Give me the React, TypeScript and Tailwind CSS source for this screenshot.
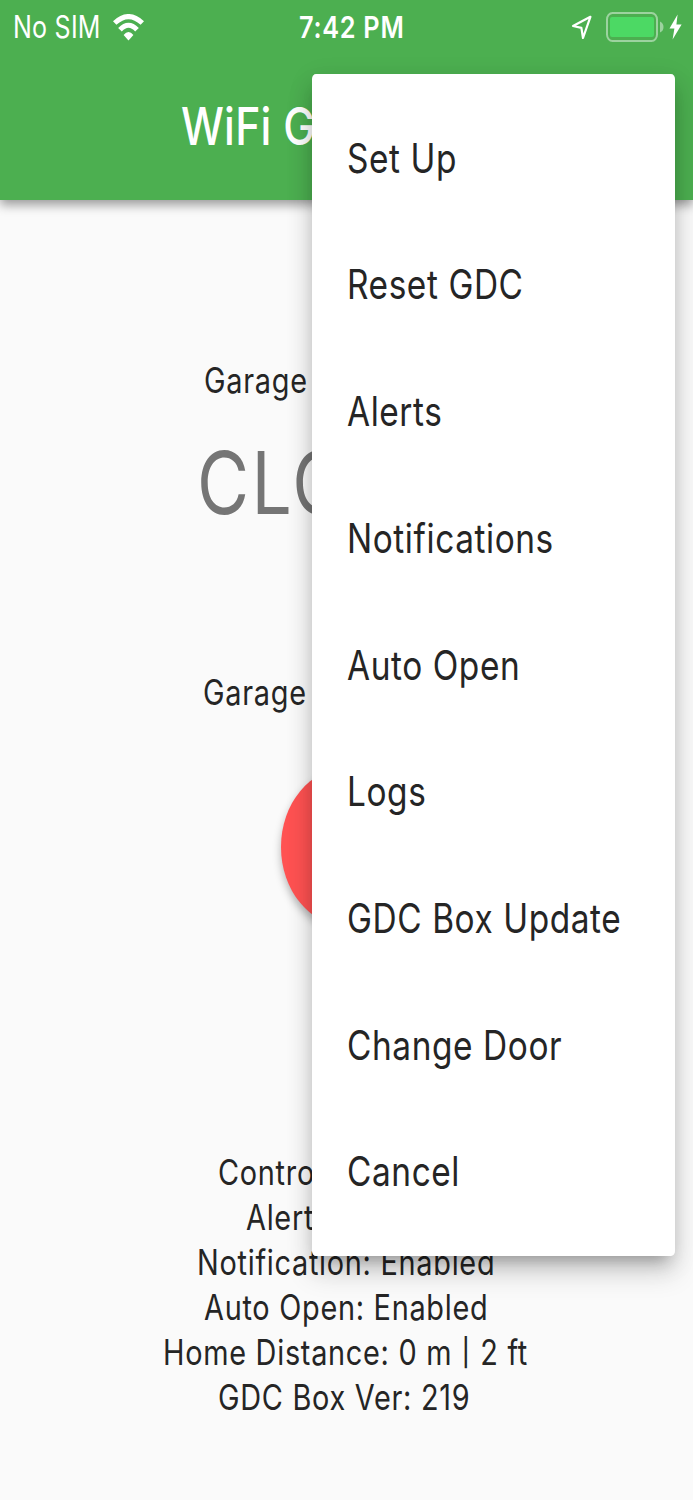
import React from 'react';

const MENU_ITEMS = [
  'Set Up',
  'Reset GDC',
  'Alerts',
  'Notifications',
  'Auto Open',
  'Logs',
  'GDC Box Update',
  'Change Door',
  'Cancel',
];

const WifiIcon = () => (
  <svg className="w-[31px] h-[27px]" viewBox="0 0 31 27" preserveAspectRatio="none" fill="none" stroke="white">
    <path d="M1.7 9 Q15.5 -3.8 29.3 9" strokeWidth="5" />
    <path d="M7 15.7 Q15.5 6.7 24 15.7" strokeWidth="5" />
    <path d="M15.5 26.6 L10.6 20.9 Q15.5 14.9 20.4 20.9 Z" fill="white" stroke="none" />
  </svg>
);

const LocationIcon = () => (
  <svg className="w-[22px] h-[26px]" viewBox="0 0 22 26" fill="none" stroke="white" strokeWidth="2.2" strokeLinejoin="round">
    <path d="M19.4 2.8 L2 12 L10.4 13.8 L12 24 Z" />
  </svg>
);

const BatteryIcon = () => (
  <svg className="w-[58px] h-[30px]" viewBox="0 0 58 30" fill="none">
    <rect x="1" y="1" width="50" height="28" rx="5.5" ry="6.5" stroke="white" strokeOpacity="0.45" strokeWidth="2" />
    <rect x="4" y="5" width="44" height="20" rx="2" fill="#4cd964" />
    <path d="M54 9.5 Q57.5 11 57.5 15 Q57.5 19 54 20.5 Z" fill="white" fillOpacity="0.45" />
  </svg>
);

const BoltIcon = () => (
  <svg className="w-[13px] h-[26px]" viewBox="0 0 13 26" fill="white">
    <path d="M8.6 0.5 L0.5 14.6 H5.4 L3.6 25.5 L12.6 10.4 H7.4 Z" />
  </svg>
);

const StatusBar = () => (
  <div className="relative flex h-[54px] items-center pl-[13px] pr-[10px] text-[30.5px] leading-none">
    <div className="w-[100px]">
      <span className="inline-block origin-left scale-x-[0.82] whitespace-nowrap tracking-[0.3px]">No SIM</span>
    </div>
    <WifiIcon />
    <div className="ml-[154.5px] w-[272.5px]">
      <span className="inline-block origin-left scale-x-[0.83] whitespace-nowrap font-semibold tracking-[0.85px]">
        7:42 PM
      </span>
    </div>
    <LocationIcon />
    <div className="ml-[13px] flex items-center gap-[5px]">
      <BatteryIcon />
      <BoltIcon />
    </div>
  </div>
);

const PopupMenu = () => (
  <ul className="absolute top-[73.5px] left-[312px] w-[363px] rounded-[4px/5px] bg-white pt-[22.2px] pb-[20.6px] shadow-[0_11px_15px_-8px_rgba(0,0,0,0.3),0_17px_26px_2px_rgba(0,0,0,0.13),0_6px_26px_2px_rgba(0,0,0,0.08)]">
    {MENU_ITEMS.map((item) => (
      <li key={item} className="flex h-[126.7px] items-center pl-[34.5px] text-[40.5px] leading-none">
        <span className="origin-left scale-x-[0.825] whitespace-nowrap tracking-[0.7px]">{item}</span>
      </li>
    ))}
  </ul>
);

export default function App() {
  return (
    <div className="relative h-[1500px] w-[693px] overflow-hidden bg-[#fafafa] font-['Inter',sans-serif] text-[#252525]">
      <header className="h-[200px] bg-[#4caf50] text-white shadow-[0_5px_10px_rgba(0,0,0,0.38)]">
        <StatusBar />
        <h1 className="flex h-[146px] items-center pl-[181px] text-[51.5px] leading-none font-medium">
          <span className="origin-left scale-x-[0.83] whitespace-nowrap tracking-[0.3px]">WiFi GDC</span>
        </h1>
      </header>

      <main className="flex flex-col text-[35px] leading-[45px] tracking-[0.87px]">
        <div className="mt-[158px] pl-[204px]">
          <span className="inline-block origin-left scale-x-[0.825] whitespace-nowrap">Garage Door</span>
        </div>
        <div className="mt-[30px] h-[100px] pl-[196.5px] text-[87px] leading-[100px] tracking-[3px] text-[#757575]">
          <span className="inline-block origin-left scale-x-[0.82] whitespace-nowrap">CLOSED</span>
        </div>
        <div className="mt-[137px] pl-[203px]">
          <span className="inline-block origin-left scale-x-[0.825] whitespace-nowrap">Garage Door</span>
        </div>
        <button className="mt-[53px] h-[158px] w-[131px] self-center rounded-[50%] bg-[#ff5252] shadow-[0_5px_8px_rgba(0,0,0,0.28)]" />

        {/* Controller summary */}
        <div className="mt-[224px] leading-[44.9px]">
          <p className="pl-[217.5px]">
            <span className="inline-block origin-left scale-x-[0.825] whitespace-nowrap">Control</span>
          </p>
          <p className="pl-[246px]">
            <span className="inline-block origin-left scale-x-[0.825] whitespace-nowrap">Alerts</span>
          </p>
          <p className="pl-[197px]">
            <span className="inline-block origin-left scale-x-[0.825] whitespace-nowrap">Notification: Enabled</span>
          </p>
          <p className="pl-[203.5px]">
            <span className="inline-block origin-left scale-x-[0.825] whitespace-nowrap">Auto Open: Enabled</span>
          </p>
          <p className="pl-[163px]">
            <span className="inline-block origin-left scale-x-[0.825] whitespace-nowrap">
              Home Distance: 0 m <span className="inline-block origin-center scale-y-[0.77]">|</span> 2 ft
            </span>
          </p>
          <p className="pl-[218px]">
            <span className="inline-block origin-left scale-x-[0.825] whitespace-nowrap">GDC Box Ver: 219</span>
          </p>
        </div>
      </main>

      <PopupMenu />
    </div>
  );
}
